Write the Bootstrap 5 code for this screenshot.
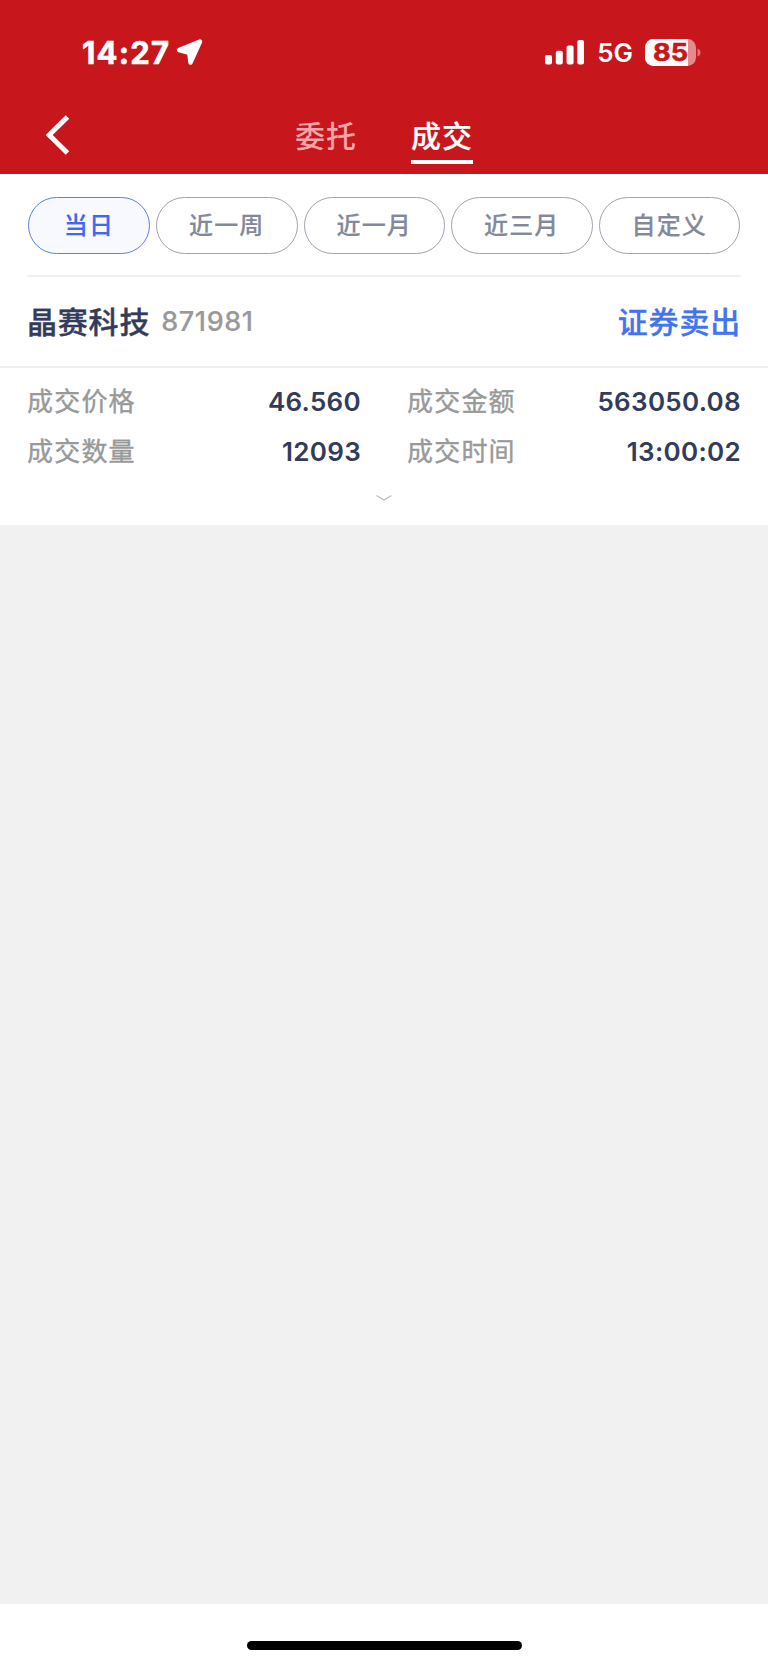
<!DOCTYPE html>
<html lang="zh-CN">
<head>
<meta charset="utf-8">
<meta name="viewport" content="width=device-width, initial-scale=1">
<title>成交</title>
<link href="https://cdn.jsdelivr.net/npm/bootstrap@5.3.0/dist/css/bootstrap.min.css" rel="stylesheet">
<style>
body{font-family:Inter,"Noto Sans CJK SC",sans-serif;background:#f1f1f1;color:#333b5b;min-height:1665px}
svg{display:block;flex:none;overflow:visible}
.top-area{background:#c7161c;height:174px;color:#fff;border-bottom:0}
.status-row{height:104px;padding:0 66px 0 82px}
.clock{font-size:31px;font-weight:700;line-height:40px;letter-spacing:1.2px;-webkit-text-stroke:.6px #fff;padding-top:2px}
.net{font-size:26px;font-weight:600;line-height:32px;margin:2px 12px 0 12px}
.title-row{height:70px}
.back-btn{width:110px;height:70px;padding:0 0 0 46px!important}
.back-btn svg{margin-top:-9px}
.tabs-wrap{margin-left:185px;gap:54px;padding-top:13px}
.tab-link{font-size:30px;line-height:38px;font-weight:500;letter-spacing:1px;color:#fff;text-decoration:none;width:62px;height:47px;white-space:nowrap}
.tab-link.off{color:#f4a5aa}
.tab-link.on{border-bottom:4px solid #fff;-webkit-text-stroke:.2px #fff}
.filters{padding:23px 0 21px 1px;margin:0 27px;gap:6px;border-bottom:2px solid #f0f0f1;height:103px}
.pill{height:57px;width:141.5px;border:1px solid #a0a3b1;border-radius:29px;color:#83889b;font-size:24px;font-weight:500;letter-spacing:1.2px;background:#fff;padding:1px 0 0 0;line-height:36px;-webkit-text-stroke:.2px}
.pill.on{width:122px;color:#4468ec;border-color:#5c80ee;background:#f7f9fe}
.stock{height:91px;padding:0 27px;border-bottom:2px solid #f0f0f1}
.stock-name{font-size:30px;font-weight:500;letter-spacing:.8px;line-height:40px;-webkit-text-stroke:.4px}
.stock-code{font-size:27px;font-weight:500;color:#999;line-height:40px;margin-left:11px;letter-spacing:.6px;-webkit-text-stroke:.2px}
.side{color:#4474ed;-webkit-text-stroke:.3px}
.details{padding:8px 27px 0 27px;height:157px}
.cell{height:50px;font-size:26px;width:334px}
.lbl{color:#999;letter-spacing:1.2px;-webkit-text-stroke:.4px}
.val{font-weight:600;letter-spacing:.3px}
.expand{margin-top:17px}
.foot{height:61px;background:#fff}
.home{width:275px;height:9px;border-radius:5px;background:#000;margin-top:37px}
</style>
</head>
<body class="d-flex flex-column">
<header class="top-area">
  <div class="status-row d-flex align-items-center justify-content-between">
    <div class="d-flex align-items-center">
      <span class="clock">14:27</span>
      <svg style="margin-left:6px" width="28" height="28" viewBox="0 0 28 28"><path d="M24 3.500 3 12 13.300 14.700 14.500 24.500Z" fill="#fff" stroke="#fff" stroke-width="4.500" stroke-linejoin="round"/></svg>
    </div>
    <div class="d-flex align-items-center">
      <svg width="40" height="25" viewBox="0 0 40 25" fill="#fff"><rect y="15" width="7" height="9.500" rx="2"/><rect x="10.800" y="10.700" width="7" height="13.800" rx="2"/><rect x="21.600" y="5.500" width="7" height="19" rx="2"/><rect x="32.300" y="0" width="6.700" height="24.500" rx="2"/></svg>
      <span class="net">5G</span>
      <svg width="57" height="27" viewBox="0 0 57 27"><defs><clipPath id="cell"><rect width="51" height="27" rx="8.500"/></clipPath></defs><g clip-path="url(#cell)"><rect width="51" height="27" fill="#e58b8e"/><rect width="43" height="27" fill="#fff"/></g><path d="M52.500 9.500q3 1 3 4t-3 4z" fill="#e07478"/><text x="8" y="22.200" font-size="24.500" font-weight="700" fill="#c7161c" stroke="#c7161c" stroke-width=".6" textLength="35" lengthAdjust="spacingAndGlyphs">85</text></svg>
    </div>
  </div>
  <nav class="title-row d-flex">
    <button class="back-btn btn border-0" aria-label="返回"><svg width="24" height="40" viewBox="0 0 24 40"><path d="M21.500 2 3.200 20 21.500 38" fill="none" stroke="#fff" stroke-width="5"/></svg></button>
    <div class="tabs-wrap d-flex align-items-start">
      <a class="tab-link off">委托</a><a class="tab-link on">成交</a>
    </div>
  </nav>
</header>
<main class="bg-white">
  <div class="filters d-flex">
    <button class="pill on">当日</button><button class="pill">近一周</button><button class="pill">近一月</button><button class="pill">近三月</button><button class="pill">自定义</button>
  </div>
  <div class="stock d-flex align-items-center">
    <span class="stock-name">晶赛科技</span><span class="stock-code">871981</span><span class="stock-name side ms-auto">证券卖出</span>
  </div>
  <div class="details">
    <div class="d-flex justify-content-between">
      <div class="cell d-flex align-items-center justify-content-between"><span class="lbl">成交价格</span><span class="val">46.560</span></div>
      <div class="cell d-flex align-items-center justify-content-between"><span class="lbl">成交金额</span><span class="val">563050.08</span></div>
    </div>
    <div class="d-flex justify-content-between">
      <div class="cell d-flex align-items-center justify-content-between"><span class="lbl">成交数量</span><span class="val">12093</span></div>
      <div class="cell d-flex align-items-center justify-content-between"><span class="lbl">成交时间</span><span class="val">13:00:02</span></div>
    </div>
    <svg class="expand mx-auto" width="18" height="10" viewBox="0 0 18 10"><path d="M1.500 2.500 9 7l7.500-4.500" fill="none" stroke="#b9bbc5" stroke-width="1.300"/></svg>
  </div>
</main>
<footer class="foot mt-auto d-flex justify-content-center"><div class="home"></div></footer>
<script src="https://cdn.jsdelivr.net/npm/bootstrap@5.3.0/dist/js/bootstrap.bundle.min.js"></script>
</body>
</html>
